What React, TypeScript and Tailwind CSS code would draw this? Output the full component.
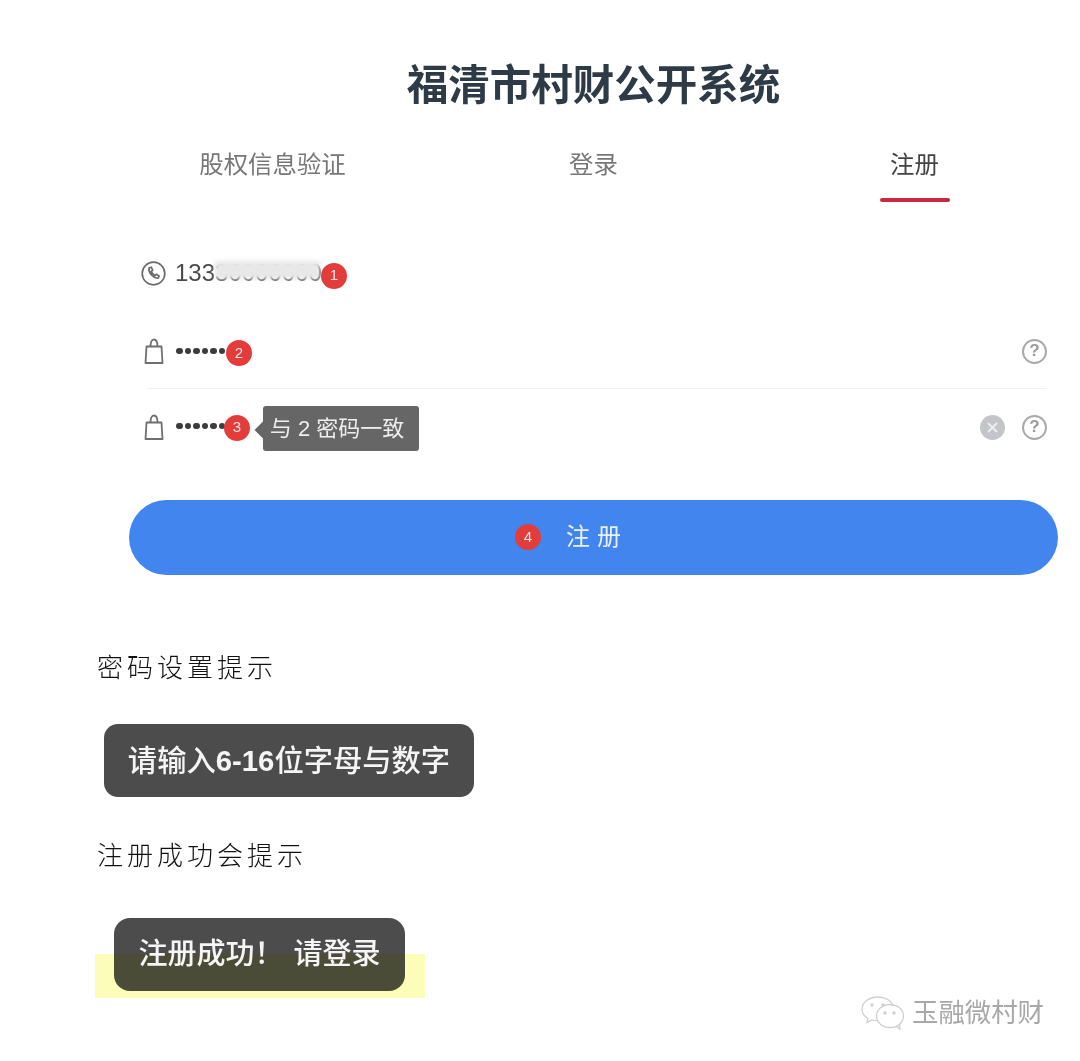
// App.tsx
const cjk = { fontFamily: '"Liberation Sans", "Noto Sans CJK SC", sans-serif' }

function Badge({ n, className = '' }: { n: number; className?: string }) {
  return (
    <span className={`flex items-center justify-center w-[26px] h-[26px] rounded-full bg-[#e33d3b] text-[#f6e3e0] text-[15px] shrink-0 ${className}`}>
      {n}
    </span>
  )
}

function BagIcon() {
  return (
    <svg width="20" height="28" viewBox="0 0 20 28" fill="none" stroke="#6f6f6f" strokeWidth="1.8" className="shrink-0">
      <path d="M2.5 9.5h15l1 16.500h-17z" strokeLinejoin="round" />
      <path d="M6.500 9.500c0-4 1-7 3.500-7s3.500 3 3.500 7" />
    </svg>
  )
}

function HelpIcon() {
  return (
    <span className="flex items-center justify-center w-[25px] h-[25px] rounded-full border-2 border-[#a9a9a9] text-[#9a9a9a] text-[17px] font-bold shrink-0">
      ?
    </span>
  )
}

function Dots() {
  return (
    <span className="flex gap-[2px] shrink-0">
      {[0, 1, 2, 3, 4, 5].map((i) => (
        <span key={i} className="w-[6.500px] h-[6.500px] rounded-full bg-[#3c3c3c]" />
      ))}
    </span>
  )
}

function WeChatIcon() {
  return (
    <svg width="44" height="34" viewBox="0 0 44 34" fill="none" stroke="#cfcfcf" strokeWidth="1.3">
      <path d="M17 1C8 1 1 6.500 1 13c0 4 2.500 7.500 6 9.500l-1 4 5-2.500c2 .6 3.500.8 5.500.8" />
      <path d="M17 1c7.500 0 13.500 3.500 15 9" />
      <circle cx="11" cy="9" r="1" fill="#cfcfcf" />
      <circle cx="22" cy="9" r="1" fill="#cfcfcf" />
      <ellipse cx="29" cy="20" rx="13.500" ry="11.500" />
      <path d="M35 30l4 3.500-.5-6" />
      <circle cx="24" cy="17" r="1" fill="#cfcfcf" />
      <circle cx="33" cy="17" r="1" fill="#cfcfcf" />
    </svg>
  )
}

export default function App() {
  return (
    <div className="w-[1080px] h-[1061px] bg-white overflow-hidden text-[#444] blur-[0.4px]" style={cjk}>
      <h1 className="pt-[58px] pl-[107px] text-center text-[41.500px] leading-[56px] font-bold text-[#2e3b47]">
        福清市村财公开系统
      </h1>

      <div className="grid grid-cols-3 w-[963px] ml-[112px] mt-[25px] text-[24.400px] text-center">
        <div className="h-[66px] pt-[8px] leading-[36px] text-[#777]">股权信息验证</div>
        <div className="h-[66px] pt-[8px] leading-[36px] text-[#777]">登录</div>
        <div className="h-[66px] pt-[8px] leading-[36px] text-[#444] flex flex-col items-center">
          注册
          <span className="w-[70px] h-[3.500px] mt-[15px] bg-[#c9283e] rounded-full" />
        </div>
      </div>

      <div className="ml-[141px] w-[906px] mt-[43px]">
        <div className="flex items-center h-[50px] gap-[9px]">
          <svg width="25" height="25" viewBox="0 0 25 25" fill="none" stroke="#6b6b6b" strokeWidth="1.700" className="shrink-0">
            <circle cx="12.500" cy="12.500" r="11.300" />
            <path d="M8 7l2.200-.8 1.500 3-1.300 1.300c.6 1.700 2 3.200 3.600 4l1.400-1.200 2.700 1.700-.8 2c-4.500.8-10-5-9.300-10z" />
          </svg>
          <span className="relative flex items-center text-[24px] text-[#4a4a4a]">
            13330000000
            <span className="absolute left-[40px] right-[2px] top-[6px] h-[18px] bg-[#e8e8e8] blur-[2px]" />
          </span>
          <Badge n={1} className="-ml-[10px] mt-[5px] relative" />
        </div>

        <div className="flex items-center mt-[28px] h-[50px] pl-[3px] border-b-0">
          <BagIcon />
          <span className="ml-[12px]"><Dots /></span>
          <Badge n={2} className="ml-[1px] mt-[4px]" />
          <span className="ml-auto"><HelpIcon /></span>
        </div>
        <div className="h-px ml-[6px] mt-[12px] bg-[#f0f0f0]" />

        <div className="flex items-center mt-[15px] h-[46px] pl-[3px]">
          <BagIcon />
          <span className="ml-[12px] mb-[2px]"><Dots /></span>
          <Badge n={3} className="-ml-[1px] mt-[1px]" />
          <span className="relative ml-[13px] flex items-center justify-center w-[156px] h-[45px] pr-[8px] bg-[#666] rounded-[3px] text-[#eeeeee] text-[22px] mt-[3px]">
            <span className="absolute -left-[6px] top-[18px] w-[12px] h-[12px] rotate-45 bg-[#666]" />
            <span className="relative">与 2 密码一致</span>
          </span>
          <span className="ml-auto flex items-center justify-center w-[25px] h-[25px] rounded-full bg-[#c4c5c9] text-white">
            <svg width="11" height="11" viewBox="0 0 11 11" stroke="#eee" strokeWidth="1.800"><path d="M1 1l9 9M10 1l-9 9" /></svg>
          </span>
          <span className="ml-[17px]"><HelpIcon /></span>
        </div>
      </div>

      <button className="flex items-center justify-center gap-[25px] ml-[129px] mt-[50px] w-[929px] h-[75px] pr-[44px] rounded-full bg-[#4285ee] text-[#e8f2ff] text-[24px]">
        <Badge n={4} className="mb-[1px]" />
        <span className="tracking-[7px] mb-[2px]">注册</span>
      </button>

      <p className="ml-[97px] mt-[74px] text-[26px] leading-[38px] tracking-[4px] font-light text-[#111]">密码设置提示</p>
      <div className="flex items-center justify-center ml-[104px] mt-[37px] w-[370px] h-[73px] rounded-[14px] bg-black/70 text-[#f5f5f5] text-[29.300px] font-medium">
        <span>请输入<span className="font-bold">6-16</span>位字母与数字</span>
      </div>

      <p className="ml-[97px] mt-[40px] text-[26px] leading-[38px] tracking-[4px] font-light text-[#111]">注册成功会提示</p>

      <div className="relative ml-[95px] mt-[43px] w-[330px] h-[80px]">
        <span className="absolute left-0 top-[36px] w-[330px] h-[44px] bg-[#fbfdb8]" />
        <div className="absolute left-[19px] top-0 flex items-center justify-center gap-[10px] w-[291px] h-[73px] rounded-[16px] bg-black/70 text-[#f5f5f5] text-[29px] font-medium">
          <span>注册成功！</span>
          <span>请登录</span>
        </div>
      </div>

      <div className="flex items-center justify-end gap-[7px] pr-[36px] -mt-[2px]">
        <WeChatIcon />
        <span className="text-[26.400px] leading-[32px] text-[#a8a8a8]">玉融微村财</span>
      </div>
    </div>
  )
}
